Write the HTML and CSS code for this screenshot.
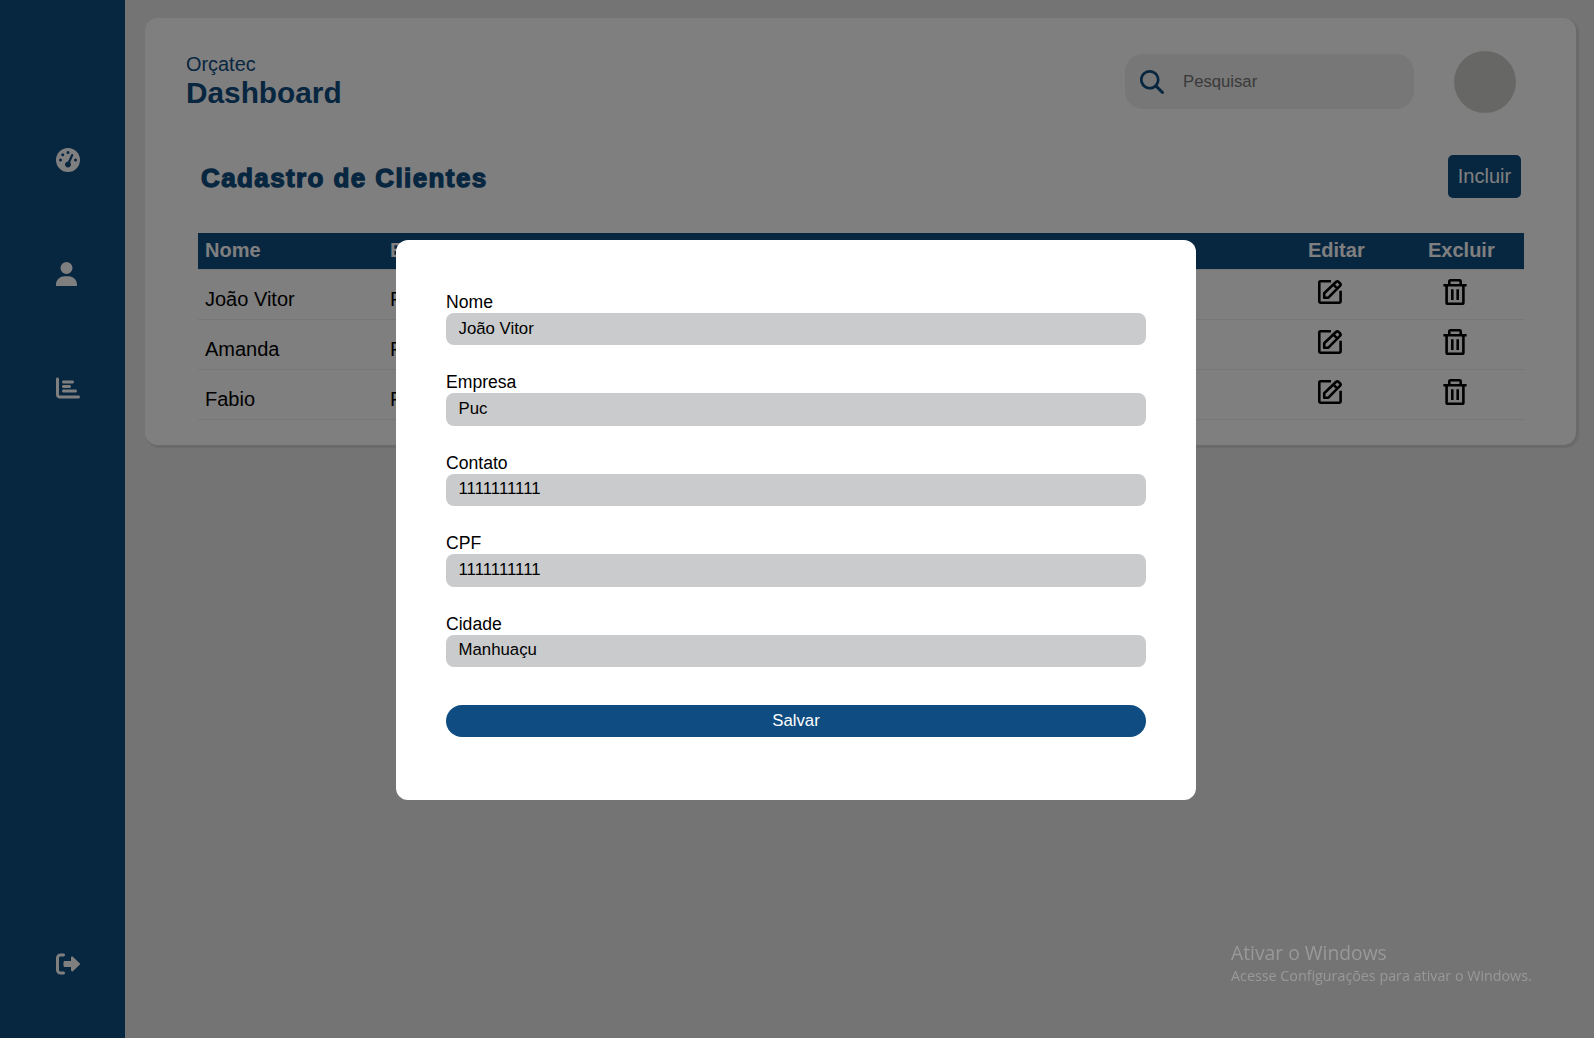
FILE: index.html
```html
<!DOCTYPE html>
<html lang="pt-br">
<head>
<meta charset="utf-8">
<title>Orçatec - Dashboard</title>
<link rel="stylesheet" href="styles.css">
</head>
<body>
<svg class="sprite" aria-hidden="true">
  <symbol id="edit" viewBox="0 0 24 24">
    <path d="M13 1.300H2.400Q1.300 1.300 1.300 2.400V21.600Q1.300 22.700 2.400 22.700H21.500Q22.600 22.700 22.600 21.600V10.800"/>
    <path d="M6.200 17.700V13.200L18.200 1.800Q19.400 .900 20.500 1.800L22.200 3.500Q23.100 4.600 22.200 5.700L10.400 17.700ZM15.400 4.600L19.400 8.600"/>
  </symbol>
  <symbol id="trash" viewBox="0 0 24 26">
    <path d="M.4 6.300H23.600M6.300 6V2.400Q6.300 1.300 7.400 1.300H16.600Q17.700 1.300 17.700 2.400V6M3.600 6.500V23.400Q3.600 24.700 4.900 24.700H19.100Q20.400 24.700 20.400 23.400V6.500M9.300 10.200V21M14.700 10.200V21"/>
  </symbol>
</svg>
<div class="layout">
  <nav class="sidebar">
    <svg viewBox="0 0 512 512"><path d="M0 256a256 256 0 1 1 512 0A256 256 0 1 1 0 256zM288 96a32 32 0 1 0 -64 0 32 32 0 1 0 64 0zM256 416c35.3 0 64-28.7 64-64c0-17.4-6.9-33.1-18.1-44.6L366 161.7c5.3-12.1-.2-26.3-12.3-31.6s-26.3 .2-31.6 12.3L257.9 288c-.6 0-1.3 0-1.9 0c-35.3 0-64 28.7-64 64s28.7 64 64 64zM176 144a32 32 0 1 0 -64 0 32 32 0 1 0 64 0zM96 288a32 32 0 1 0 0-64 32 32 0 1 0 0 64zm352-32a32 32 0 1 0 -64 0 32 32 0 1 0 64 0z"/></svg>
    <svg viewBox="0 0 512 512"><path d="M224 256A128 128 0 1 0 224 0a128 128 0 1 0 0 256zM178.300 304C79.800 304 0 383.800 0 482.300V512H448V482.300C448 383.800 368.200 304 269.700 304z"/></svg>
    <svg viewBox="0 0 512 512"><path d="M32 32c17.700 0 32 14.300 32 32V400c0 8.800 7.200 16 16 16H480c17.700 0 32 14.300 32 32s-14.300 32-32 32H80c-44.200 0-80-35.800-80-80V64C0 46.300 14.300 32 32 32zm96 96c0-17.700 14.300-32 32-32l192 0c17.700 0 32 14.300 32 32s-14.300 32-32 32l-192 0c-17.700 0-32-14.300-32-32zm32 64H288c17.700 0 32 14.300 32 32s-14.300 32-32 32H160c-17.700 0-32-14.300-32-32s14.300-32 32-32zm0 96H416c17.700 0 32 14.300 32 32s-14.300 32-32 32H160c-17.700 0-32-14.300-32-32s14.300-32 32-32z"/></svg>
    <svg class="logout" viewBox="0 0 512 512"><path d="M96 480h64c17.670 0 32-14.330 32-32s-14.330-32-32-32H96c-17.670 0-32-14.330-32-32V128c0-17.670 14.330-32 32-32h64c17.670 0 32-14.330 32-32s-14.330-32-32-32H96C42.980 32 0 74.980 0 128v256C0 437 42.980 480 96 480zM504.800 238.500l-144.100-136c-6.975-6.578-17.200-8.375-26-4.594c-8.803 3.797-14.510 12.470-14.510 22.050l-.092 72l-128 0c-17.690 0-32.020 14.330-32.020 32v64c0 17.670 14.340 32 32.020 32l128 0l.092 71.100c0 9.578 5.707 18.250 14.510 22.050c8.803 3.781 19.030 1.984 26-4.594l144.100-136C514.400 264.400 514.400 247.600 504.800 238.500z"/></svg>
  </nav>
  <main class="main">
    <section class="card">
      <header class="header">
        <div class="brand">
          <span>Orçatec</span>
          <h2>Dashboard</h2>
        </div>
        <div class="search">
          <svg viewBox="0 0 512 512"><path d="M416 208c0 45.900-14.900 88.300-40 122.700L502.600 457.400c12.500 12.500 12.500 32.800 0 45.300s-32.800 12.500-45.300 0L330.700 376c-34.400 25.200-76.800 40-122.700 40C93.100 416 0 322.900 0 208S93.100 0 208 0S416 93.100 416 208zM208 360a152 152 0 1 0 0-304 152 152 0 1 0 0 304z"/></svg>
          <span>Pesquisar</span>
        </div>
        <div class="avatar"></div>
      </header>
      <div class="title-row">
        <h1>Cadastro de Clientes</h1>
        <button class="add">Incluir</button>
      </div>
      <div class="table">
        <div class="row head"><span>Nome</span><span>Empresa</span><span>Editar</span><span>Excluir</span></div>
        <div class="row"><span>João Vitor</span><span>Puc</span><svg class="edit"><use href="#edit"/></svg><svg class="trash"><use href="#trash"/></svg></div>
        <div class="row"><span>Amanda</span><span>Puc</span><svg class="edit"><use href="#edit"/></svg><svg class="trash"><use href="#trash"/></svg></div>
        <div class="row"><span>Fabio</span><span>Puc</span><svg class="edit"><use href="#edit"/></svg><svg class="trash"><use href="#trash"/></svg></div>
      </div>
    </section>
  </main>
</div>
<div class="overlay">
  <form class="modal">
    <label class="field">Nome<input type="text" value="João Vitor"></label>
    <label class="field">Empresa<input type="text" value="Puc"></label>
    <label class="field">Contato<input type="text" value="1111111111"></label>
    <label class="field">CPF<input type="text" value="1111111111"></label>
    <label class="field">Cidade<input type="text" value="Manhuaçu"></label>
    <button class="save" type="button">Salvar</button>
  </form>
</div>
<div class="watermark">
  <p class="wm-title">Ativar o Windows</p>
  <p class="wm-text">Acesse Configurações para ativar o Windows.</p>
</div>
</body>
</html>
```
FILE: styles.css
```css
* { box-sizing: border-box; margin: 0; padding: 0; }
body {
  font-family: "Liberation Sans", Arial, sans-serif;
  background: #e8e8e8;
  color: #000;
  overflow: hidden;
}
button, input { font-family: inherit; border: 0; }
.sprite { display: none; }
.layout { display: flex; height: 100vh; }

.sidebar {
  width: 125px;
  background: #0f4c81;
  padding: 148px 0 62px 56px;
  display: flex;
  flex-direction: column;
  gap: 90px;
}
.sidebar svg { width: 24px; height: 24px; fill: #fff; }
.sidebar .logout { margin-top: auto; }

.main { flex: 1; padding: 18px 18px 0 20px; }
.card {
  height: 427px;
  background: #fff;
  border-radius: 13px;
  box-shadow: 2px 2px 1px 1px #d5d5d5;
}
.header {
  height: 120px;
  padding: 33px 60px 0 41px;
  display: flex;
  align-items: flex-start;
}
.brand { flex: 1; padding-top: 2px; color: #0f4c81; }
.brand span { display: block; font-size: 19.900px; line-height: 23px; }
.brand h2 { font-size: 29.800px; line-height: 34px; }
.search {
  width: 289px;
  height: 55px;
  margin: 3px 40px 0 0;
  padding-left: 15px;
  border-radius: 18px;
  background: #eee;
  display: flex;
  align-items: center;
  gap: 19px;
  font-size: 16.700px;
  color: #757575;
}
.search svg { width: 24px; height: 24px; fill: #0f4c81; margin-top: 1px; }
.search span { line-height: 20px; margin-top: 1px; }
.avatar { width: 62px; height: 62px; border-radius: 50%; background: #cfcfcc; }

.title-row {
  height: 95px;
  padding: 17px 55px 0 56px;
  display: flex;
  justify-content: space-between;
  align-items: flex-start;
}
.title-row h1 {
  padding-top: 9px;
  font-size: 26px;
  line-height: 28px;
  letter-spacing: 1.400px;
  color: #0f4c81;
  -webkit-text-stroke: 1.300px #0f4c81;
}
.add {
  width: 73px;
  height: 43px;
  padding-bottom: 1px;
  border-radius: 5px;
  background: #0f4c81;
  color: #fff;
  font-size: 20px;
}

.table { margin: 0 52px 0 53px; font-size: 20px; }
.row {
  height: 50px;
  padding: 13px 0 0 7px;
  display: grid;
  grid-template-columns: 185px 1fr 120px 97px;
  align-items: start;
  line-height: 32px;
  border-bottom: 1px solid #eee;
}
.head {
  height: 37px;
  padding: 6px 0 0 7px;
  grid-template-columns: 185px 1fr 120px 96px;
  line-height: 23px;
  font-weight: bold;
  color: #fff;
  background: #0f4c81;
  background-clip: padding-box;
}
.row svg { fill: none; stroke: #000; stroke-width: 2.600; stroke-linejoin: round; }
.edit { width: 24px; height: 24px; margin: -3px 0 0 11px; }
.trash { width: 24px; height: 26px; margin: -4px 0 0 16px; }

.overlay {
  position: fixed;
  inset: 0;
  background: rgba(0, 0, 0, .5);
  display: flex;
  justify-content: center;
  padding: 240px 2px 0 0;
}
.modal {
  width: 800px;
  height: 560px;
  padding: 50px;
  border-radius: 12px;
  background: #fff;
}
.field {
  display: block;
  height: 80.400px;
  font-size: 17.600px;
  line-height: 25px;
}
.field input {
  display: block;
  width: 100%;
  height: 32.400px;
  margin-top: -2px;
  padding: 0 12px 1px 12.500px;
  border-radius: 8px;
  background: #cacbcc;
  color: #000;
  font-size: 16.800px;
}
.save {
  display: block;
  width: 100%;
  height: 32px;
  margin-top: 13px;
  border-radius: 16px;
  background: #0f4c81;
  color: #fff;
  font-size: 16.800px;
}

.watermark {
  position: fixed;
  left: 1231px;
  top: 939px;
  color: #999;
  font-family: "Open Sans", "Noto Sans", sans-serif;
  white-space: nowrap;
}
.wm-title { font-size: 19.300px; line-height: 28px; }
.wm-text { font-size: 14.300px; line-height: 17px; }
```
